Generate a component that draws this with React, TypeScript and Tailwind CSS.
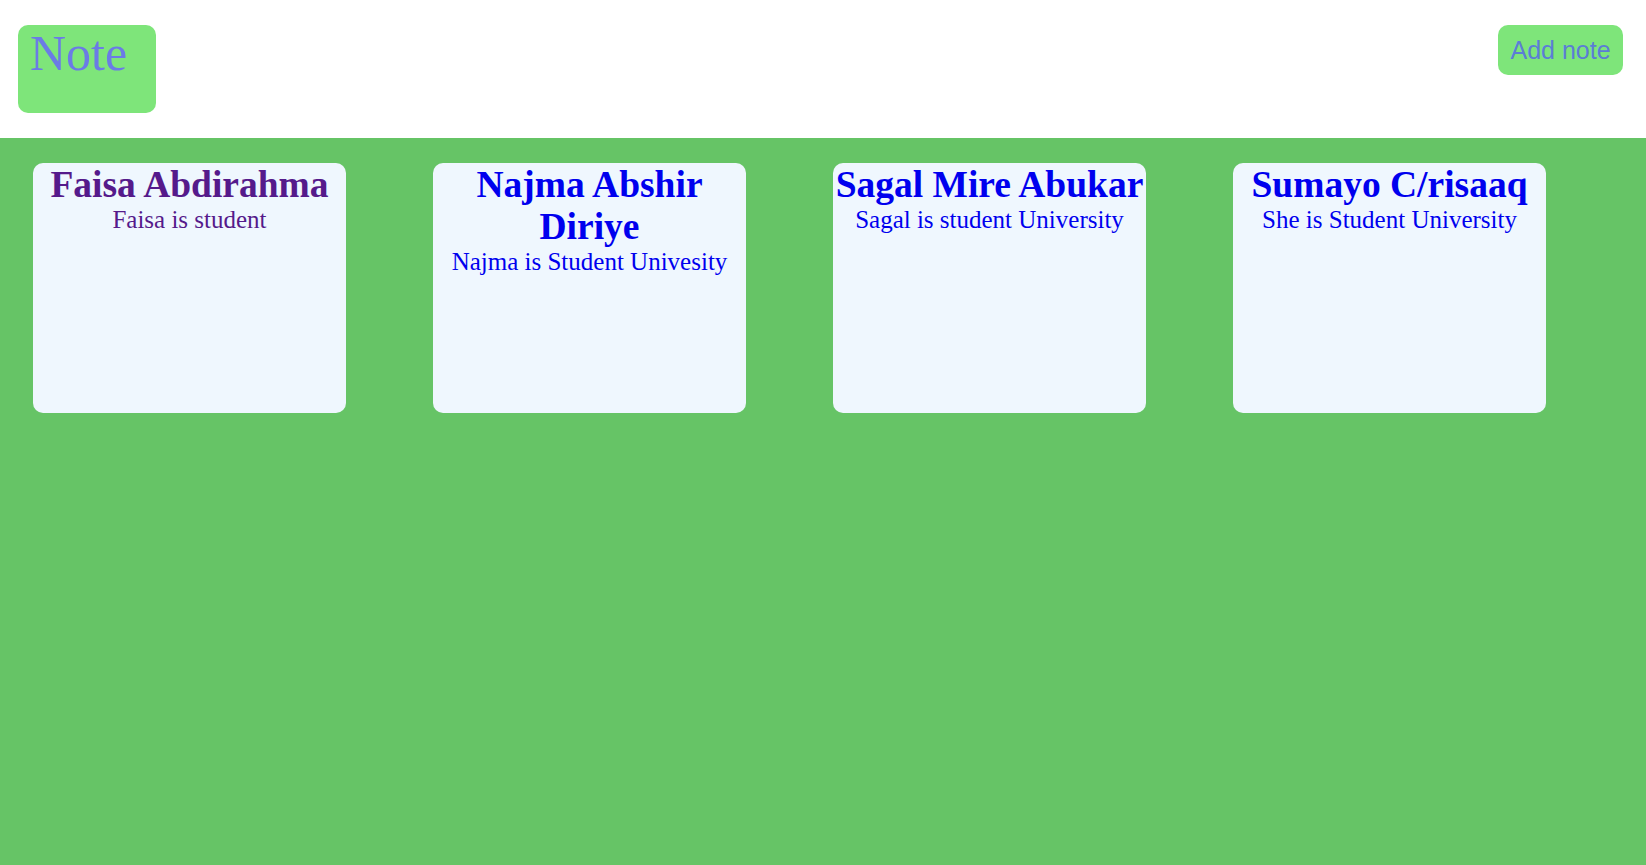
import React from "react";

const notes = [
  { title: "Faisa Abdirahma", body: "Faisa is student", color: "text-[#551a8b]" },
  { title: "Najma Abshir Diriye", body: "Najma is Student Univesity", color: "text-[#0000ee]" },
  { title: "Sagal Mire Abukar", body: "Sagal is student University", color: "text-[#0000ee]" },
  { title: "Sumayo C/risaaq", body: "She is Student University", color: "text-[#0000ee]" },
];

export default function App() {
  return (
    <div className="w-[1646px] h-[865px] flex flex-col bg-white">
      <header className="h-[138px] shrink-0 flex justify-between items-start pt-[25px] pl-[18px] pr-[23px] bg-white">
        <div className="w-[138px] h-[88px] rounded-[10px] bg-[#7ee57a] pl-[12px] pt-[1px] text-[50px] leading-[1.107] text-[#6b7be6] font-['Liberation_Serif',serif]">
          Note
        </div>
        <button className="w-[125px] h-[50px] rounded-[10px] bg-[#7ee57a] flex items-center justify-center pt-[2px] text-[25px] text-[#5b7dd6] font-['Liberation_Sans',Arial,sans-serif]">
          Add note
        </button>
      </header>
      <main className="flex-1 bg-[#66c466] flex items-start gap-[87px] pl-[33px] pt-[25px] font-['Liberation_Serif',serif]">
        {notes.map((n) => (
          <div
            key={n.title}
            className={`w-[313px] h-[250px] shrink-0 rounded-[10px] bg-[#eff7fe] text-center ${n.color}`}
          >
            <div className="text-[37.5px] font-bold leading-[42px] pt-[1px]">{n.title}</div>
            <div className="text-[25px] leading-[1.149]">{n.body}</div>
          </div>
        ))}
      </main>
    </div>
  );
}
